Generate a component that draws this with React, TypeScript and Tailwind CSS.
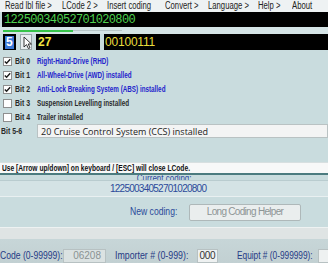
import React from 'react';

const sans = { fontFamily: '"Liberation Sans", Arial, sans-serif' };

// screenshot is squeezed horizontally, so the text is too
const Sq = ({ children, className = 'scale-x-[0.77]' }: { children: React.ReactNode; className?: string }): React.JSX.Element => (
  <span className={`inline-block whitespace-nowrap origin-left ${className}`}>{children}</span>
);

const menuItems: { label: string; w: string }[] = [
  { label: 'Read lbl file >', w: 'w-[57px]' },
  { label: 'LCode 2 >', w: 'w-[45px]' },
  { label: 'Insert coding', w: 'w-[58px]' },
  { label: 'Convert >', w: 'w-[43px]' },
  { label: 'Language >', w: 'w-[50px]' },
  { label: 'Help >', w: 'w-[34px]' },
  { label: 'About', w: 'w-[30px]' },
];

type Bit = { bit: string; label: string; checked: boolean };

const bits: Bit[] = [
  { bit: 'Bit 0', label: 'Right-Hand-Drive (RHD)', checked: true },
  { bit: 'Bit 1', label: 'All-Wheel-Drive (AWD) installed', checked: true },
  { bit: 'Bit 2', label: 'Anti-Lock Breaking System (ABS) installed', checked: true },
  { bit: 'Bit 3', label: 'Suspension Levelling installed', checked: false },
  { bit: 'Bit 4', label: 'Trailer installed', checked: false },
];

const CheckBox = ({ checked }: { checked: boolean }): React.JSX.Element => (
  <span className="w-[9px] h-[9px] border border-[#8e8f8f] bg-white flex items-center justify-center shrink-0">
    {checked && (
      <svg width="7" height="7" viewBox="0 0 7 7">
        <path d="M0.8 3.4 L2.6 5.3 L6.2 1.2" fill="none" stroke="#1d1d1d" strokeWidth="1.4" />
      </svg>
    )}
  </span>
);

const App = (): React.JSX.Element => {
  return (
    <div className="w-[328px] h-[263px] overflow-hidden bg-[#c9dcde] flex flex-col" style={sans}>
      {/* menu */}
      <div className="h-[12px] bg-[#eef2f3] flex items-center pl-[5px] text-[10px] leading-none text-[#222]">
        {menuItems.map((m) => (
          <span key={m.label} className={`${m.w} shrink-0`}><Sq>{m.label}</Sq></span>
        ))}
      </div>

      {/* lcode display */}
      <div className="h-[15px] ml-[2px] bg-black flex items-center pl-[2px]">
        <span className="text-[12px] leading-none tracking-[-0.65px] text-[#4fd24f] font-['Liberation_Mono',monospace]">
          12250034052701020800
        </span>
      </div>

      {/* progress */}
      <div className="h-[7px] bg-[#d5e4e6] flex items-center pl-[3px]">
        <div className="w-[70px] h-[2px] bg-[#37c44a]" />
        <div className="w-[49px] h-[1px] bg-[#b7c6c8]" />
      </div>

      {/* byte row */}
      <div className="h-[16px] flex items-stretch pl-[3px]">
        <div className="w-[13px] bg-black flex items-center pl-[2px]">
          <span className="bg-[#3a78d6] text-white font-bold text-[12px] leading-none px-[1px] h-[13px] flex items-center">5</span>
        </div>
        <div className="w-[12px] ml-[4px] bg-[#e9eef0] border border-[#9aa8aa] relative">
          <svg className="absolute left-[2px] top-[1px]" width="10" height="14" viewBox="0 0 10 14">
            <path d="M1 1 L1 11 L3.5 8.6 L5.4 12.6 L7 11.8 L5.2 8 L8.4 8 Z" fill="white" stroke="#222" strokeWidth="0.9" />
          </svg>
        </div>
        <div className="w-[64px] ml-[4px] bg-black flex items-center pl-[2px]">
          <span className="text-[#f3e642] font-bold text-[12px] leading-none">27</span>
        </div>
        <div className="flex-1 ml-[4px] bg-black flex items-center pl-[1px]">
          <span className="text-[#e8dc3c] text-[12px] leading-none tracking-[-0.2px]">00100111</span>
        </div>
      </div>

      {/* bits */}
      <div className="flex flex-col pt-[4px]">
        {bits.map((b) => (
          <div key={b.bit} className="h-[14px] flex items-center pl-[3px] text-[9px] font-bold leading-none">
            <CheckBox checked={b.checked} />
            <span className="w-[22px] ml-[3px] text-[#2a2a2a] shrink-0"><Sq>{b.bit}</Sq></span>
            <Sq className={b.checked ? 'scale-x-[0.7] text-[#2424cc]' : 'scale-x-[0.7] text-[#2a2a2a]'}>{b.label}</Sq>
          </div>
        ))}
        <div className="h-[14px] flex items-center">
          <span className="w-[37px] pl-[1px] text-[9px] font-bold text-[#2a2a2a] leading-none"><Sq>Bit 5-6</Sq></span>
          <div className="flex-1 h-[14px] bg-[#f3f4f4] border border-[#b9c2c3] flex items-center pl-[3px]">
            <span className="text-[9px] text-[#222] leading-none" style={{ fontFamily: '"Open Sans", "Liberation Sans", sans-serif' }}>
              20 Cruise Control System (CCS) installed
            </span>
          </div>
        </div>
      </div>

      <div className="h-[24px]" />

      {/* hint */}
      <div className="h-[11px] bg-[#f7f8f8] border-t border-[#d7dfe0] flex items-center pl-[2px]">
        <Sq className="scale-x-[0.74] text-[9px] font-bold text-[#111] leading-none">
          Use [Arrow up/down] on keyboard / [ESC] will close LCode.
        </Sq>
      </div>
      <div className="h-[2px] bg-[#4b7b7f]" />

      {/* current coding, half hidden under the hint */}
      <div className="h-[5px] overflow-hidden flex items-end justify-center">
        <span className="text-[10px] leading-none text-[#2e4a9c] translate-y-[4px] inline-block scale-x-[0.8]">Current coding:</span>
      </div>
      <div className="h-[17px] bg-[#d4e3e5] border-t border-[#b9cccf] border-b border-b-[#e9f0f1] flex items-center pl-[110px]">
        <span className="text-[10px] leading-none text-[#2b4a9a] tracking-[-0.75px]">12250034052701020800</span>
      </div>

      {/* new coding */}
      <div className="h-[30px] flex items-center pl-[130px]">
        <span className="w-[59px] text-[10px] leading-none text-[#2b4a9a]"><Sq className="scale-x-[0.86]">New coding:</Sq></span>
        <div className="w-[112px] h-[17px] bg-[#eaeeee] border border-[#aeb8b9] rounded-[2px] flex items-center justify-center">
          <span className="text-[10px] leading-none text-[#8d9595] tracking-[-0.7px]">Long Coding Helper</span>
        </div>
      </div>

      <div className="h-[12px] bg-[#dfe4e4] border-t border-[#eef2f2]" />

      {/* bottom fields */}
      <div className="flex-1 bg-gradient-to-b from-[#c7d6d8] to-[#c2d0d2] flex items-end">
        <div className="h-[14px] flex items-center w-full text-[10px] leading-none text-[#253a85]">
          <span className="w-[63px] shrink-0"><Sq className="scale-x-[0.86]">Code (0-99999):</Sq></span>
          <div className="w-[43px] h-[14px] bg-[#dbe2e2] border border-[#b7c1c2] flex items-center justify-end pr-[4px] shrink-0">
            <span className="text-[#8a9293]">06208</span>
          </div>
          <span className="w-[82px] ml-[9px] shrink-0"><Sq className="scale-x-[0.88]">Importer # (0-999):</Sq></span>
          <div className="w-[21px] h-[14px] bg-[#eef1f1] border border-[#b7c1c2] flex items-center justify-center shrink-0">
            <span className="text-[#333] tracking-[-0.3px]">000</span>
          </div>
          <span className="w-[81px] ml-[19px] shrink-0"><Sq className="scale-x-[0.83]">Equipt # (0-999999):</Sq></span>
          <div className="w-[12px] h-[14px] bg-[#eef1f1] border border-[#b7c1c2] shrink-0" />
        </div>
      </div>
    </div>
  );
};

export default App;
